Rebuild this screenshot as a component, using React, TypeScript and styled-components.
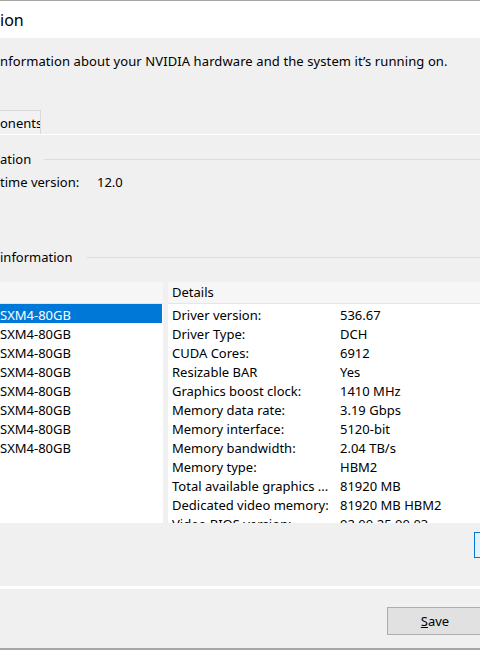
import React from "react";
import styled, { createGlobalStyle } from "styled-components";

const GlobalStyle = createGlobalStyle`
  html, body { margin: 0; padding: 0; }
  body {
    background: #f0f0f0;
    font-family: "Noto Sans", "Open Sans", sans-serif;
    font-size: 13px;
    color: #000;
  }
  * { box-sizing: border-box; }
`;

const Window = styled.div`
  width: 480px;
  height: 650px;
  overflow: hidden;
  display: flex;
  flex-direction: column;
  background: #f0f0f0;
  border-top: 1px solid #a3a3a3;
  border-bottom: 2px solid #a6a6a6;
`;

const TitleBar = styled.div`
  height: 37px;
  flex: none;
  background: #ffffff;
  display: flex;
  align-items: center;
  font-size: 16px;
`;

const Content = styled.div`
  display: flex;
  flex-direction: column;
  flex: 1;
`;

const Description = styled.div`
  margin-top: 15px;
  height: 16px;
  line-height: 16px;
  letter-spacing: 0.1px;
  white-space: nowrap;
`;

const TabStrip = styled.div`
  margin-top: 41px;
  height: 24px;
  display: flex;
`;

const Tab = styled.div`
  width: 41px;
  height: 24px;
  border-top: 1px solid #d9d9d9;
  border-right: 1px solid #d9d9d9;
  background: #f2f2f2;
  line-height: 24px;
  white-space: nowrap;
  overflow: hidden;
`;

const Panel = styled.div`
  border-top: 1px solid #ffffff;
  display: flex;
  flex-direction: column;
`;

const GroupHeader = styled.div<{ $top: number; $gap: number }>`
  margin-top: ${(p) => p.$top}px;
  height: 16px;
  line-height: 16px;
  display: flex;
  align-items: center;
  gap: ${(p) => p.$gap}px;
  white-space: nowrap;
`;

const GroupLine = styled.div`
  flex: 1;
  height: 1px;
  background: #dcdcdc;
`;

const InfoRow = styled.div`
  margin-top: 7px;
  height: 16px;
  line-height: 16px;
  display: grid;
  grid-template-columns: 97px 1fr;
  white-space: nowrap;
`;

const Lists = styled.div`
  margin-top: 17px;
  display: grid;
  grid-template-columns: 163px 1fr;
  grid-template-rows: 22px 219px;
  column-gap: 5px;
  background: #f0f0f0;
`;

const ListHeader = styled.div`
  background: #f6f6f6;
  border-bottom: 1px solid #e6e6e6;
  line-height: 21px;
  padding-left: 4px;
  white-space: nowrap;
`;

const ListBody = styled.div`
  background: #ffffff;
  overflow: hidden;
`;

const GpuRow = styled.div<{ $selected?: boolean }>`
  height: 19px;
  padding-top: 2px;
  line-height: 19px;
  margin-right: 1px;
  white-space: nowrap;
  background: ${(p) => (p.$selected ? "#0078d7" : "transparent")};
  color: ${(p) => (p.$selected ? "#ffffff" : "#000000")};
`;

const DetailRow = styled.div`
  height: 19px;
  padding: 2px 0 0 4px;
  line-height: 19px;
  display: grid;
  grid-template-columns: 168px 1fr;
  white-space: nowrap;
`;

const Cell = styled.span`
  overflow: hidden;
`;

const ButtonArea = styled.div`
  height: 63px;
  padding-top: 9px;
  display: flex;
  justify-content: flex-end;
`;

const FocusButton = styled.div`
  width: 75px;
  height: 26px;
  margin-right: -69px;
  border: 1px solid #0078d7;
  background: #e5f1fb;
`;

const Separator = styled.div`
  height: 3px;
  background: #ffffff;
`;

const Footer = styled.div`
  height: 59px;
  padding-top: 18px;
  display: flex;
  justify-content: flex-end;
`;

const Button = styled.button`
  width: 96px;
  height: 28px;
  margin-right: -3px;
  border: 1px solid #adadad;
  background: #e1e1e1;
  font-family: "Noto Sans", "Open Sans", sans-serif;
  font-size: 13px;
  color: #000;
  padding: 0;
  line-height: 26px;
`;

const Mnemonic = styled.span`
  text-decoration: underline;
`;

const gpus = Array.from({ length: 8 }, () => "SXM4-80GB");

const details: [string, string][] = [
  ["Driver version:", "536.67"],
  ["Driver Type:", "DCH"],
  ["CUDA Cores:", "6912"],
  ["Resizable BAR", "Yes"],
  ["Graphics boost clock:", "1410 MHz"],
  ["Memory data rate:", "3.19 Gbps"],
  ["Memory interface:", "5120-bit"],
  ["Memory bandwidth:", "2.04 TB/s"],
  ["Memory type:", "HBM2"],
  ["Total available graphics ...", "81920 MB"],
  ["Dedicated video memory:", "81920 MB HBM2"],
  ["Video BIOS version:", "92.00.25.00.03"],
];

export default function App() {
  return (
    <>
      <GlobalStyle />
      <Window>
        <TitleBar>ion</TitleBar>
        <Content>
          <Description>
            nformation about your NVIDIA hardware and the system it’s running on.
          </Description>
          <TabStrip>
            <Tab>onents</Tab>
          </TabStrip>
          <Panel>
            <GroupHeader $top={16} $gap={13}>
              <span>ation</span>
              <GroupLine />
            </GroupHeader>
            <InfoRow>
              <span>time version:</span>
              <span>12.0</span>
            </InfoRow>
            <GroupHeader $top={59} $gap={14}>
              <span>information</span>
              <GroupLine />
            </GroupHeader>
            <Lists>
              <ListHeader />
              <ListHeader>Details</ListHeader>
              <ListBody>
                {gpus.map((g, i) => (
                  <GpuRow key={i} $selected={i === 0}>
                    {g}
                  </GpuRow>
                ))}
              </ListBody>
              <ListBody>
                {details.map(([k, v]) => (
                  <DetailRow key={k}>
                    <Cell>{k}</Cell>
                    <Cell>{v}</Cell>
                  </DetailRow>
                ))}
              </ListBody>
            </Lists>
            <ButtonArea>
              <FocusButton />
            </ButtonArea>
          </Panel>
          <Separator />
          <Footer>
            <Button>
              <Mnemonic>S</Mnemonic>ave
            </Button>
          </Footer>
        </Content>
      </Window>
    </>
  );
}
